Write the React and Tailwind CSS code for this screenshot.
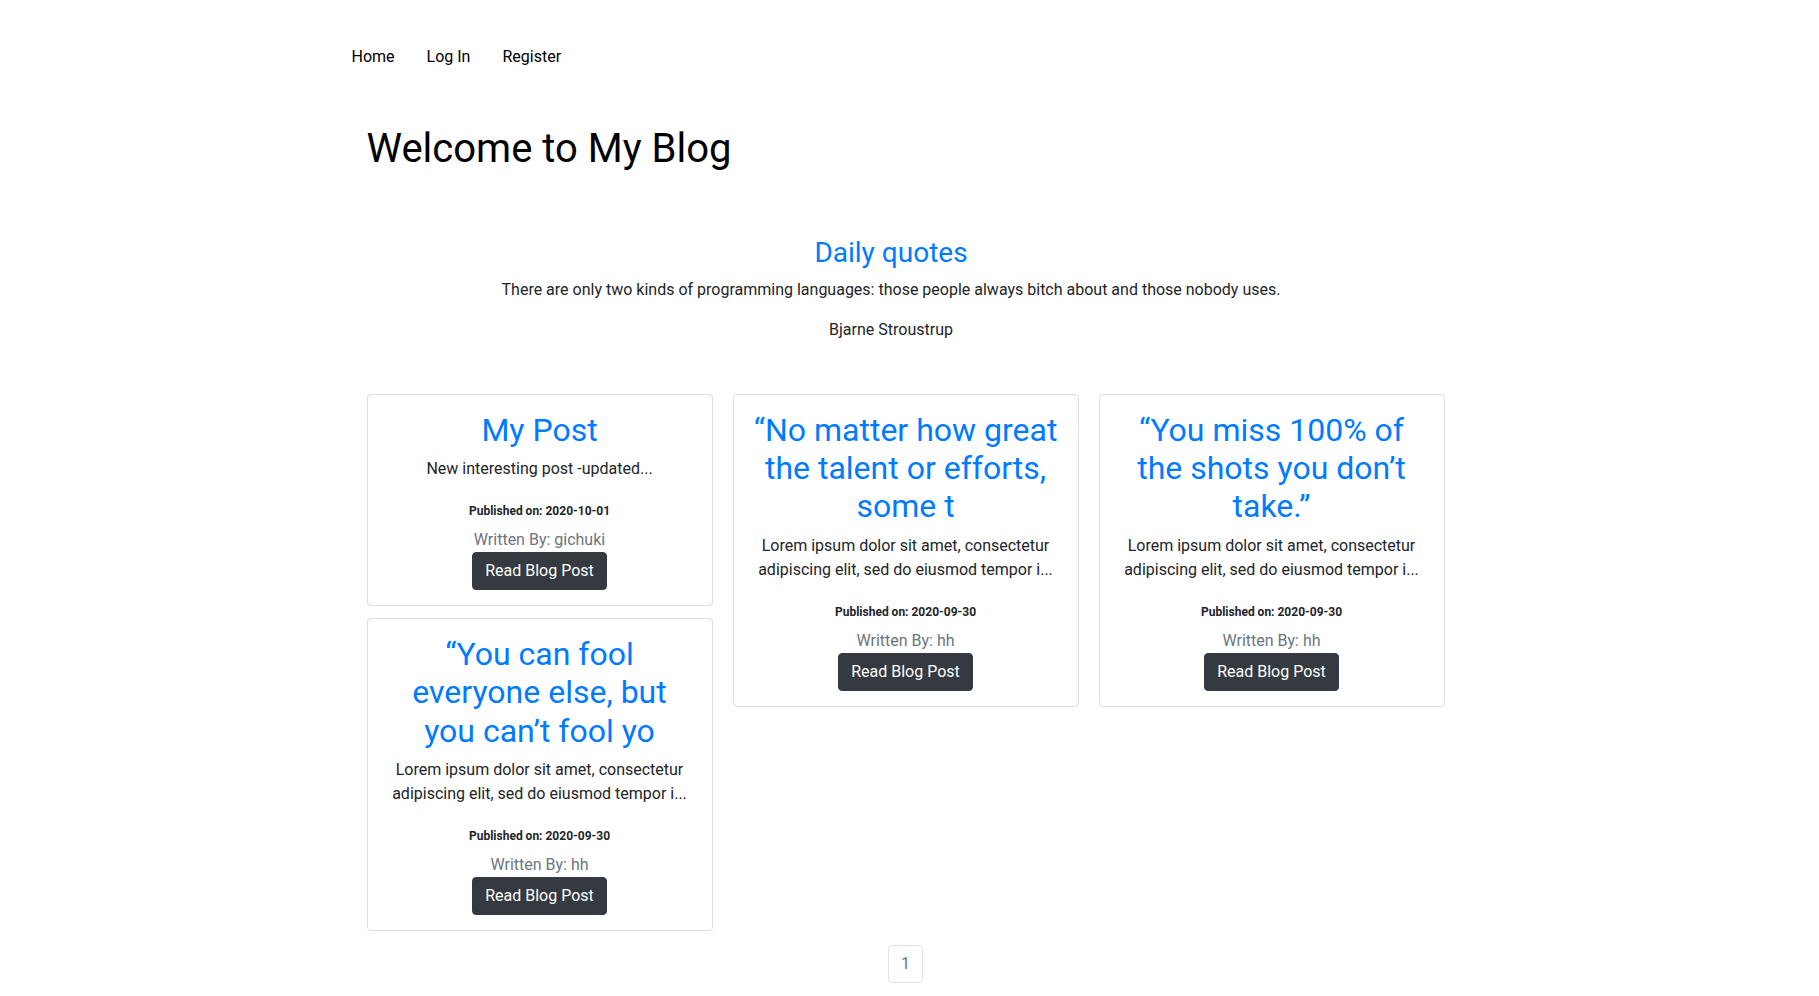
import React from 'react';

const posts = [
  {
    col: 0,
    title: 'My Post',
    body: 'New interesting post -updated...',
    date: '2020-10-01',
    author: 'gichuki',
  },
  {
    col: 0,
    title: '“You can fool everyone else, but you can’t fool yo',
    body: 'Lorem ipsum dolor sit amet, consectetur adipiscing elit, sed do eiusmod tempor i...',
    date: '2020-09-30',
    author: 'hh',
  },
  {
    col: 1,
    title: '“No matter how great the talent or efforts, some t',
    body: 'Lorem ipsum dolor sit amet, consectetur adipiscing elit, sed do eiusmod tempor i...',
    date: '2020-09-30',
    author: 'hh',
  },
  {
    col: 2,
    title: '“You miss 100% of the shots you don’t take.”',
    body: 'Lorem ipsum dolor sit amet, consectetur adipiscing elit, sed do eiusmod tempor i...',
    date: '2020-09-30',
    author: 'hh',
  },
];

const PostCard = ({ post }) => (
  <div className="border border-[#dfdfdf] rounded bg-white px-4 pt-4 pb-[15px] text-center">
    <h2 className="text-[32px] leading-[1.2] text-[#007bff] mb-2">{post.title}</h2>
    <p className="text-base leading-6 text-[#212529] mb-[17px]">{post.body}</p>
    <p className="leading-6 mb-[5px]">
      <small className="text-[12px] font-bold text-[#212529]">Published on: {post.date}</small>
    </p>
    <div className="leading-6 text-[#6c757d]">Written By: {post.author}</div>
    <button
      type="button"
      className="bg-[#343a40] text-white border border-[#343a40] rounded px-3 py-[6px] leading-6 text-base"
    >
      Read Blog Post
    </button>
  </div>
);

export default function App() {
  const columns = [0, 1, 2].map((c) => posts.filter((p) => p.col === c));

  return (
    <div className="min-h-screen bg-white font-['Roboto',sans-serif] text-[#212529]">
      <div className="w-[1140px] mx-auto">
        {/* nav */}
        <nav className="pt-[45px] -ml-1">
          <ul className="flex">
            <li><a href="#" className="block px-4 leading-6 text-black">Home</a></li>
            <li><a href="#" className="block px-4 leading-6 text-black">Log In</a></li>
            <li><a href="#" className="block px-4 leading-6 text-black">Register</a></li>
          </ul>
        </nav>

        <h1 className="mt-[56px] ml-[27px] text-[40px] leading-[1.2] text-black">Welcome to My Blog</h1>

        {/* daily quote */}
        <div className="mt-[63px] ml-[15px] w-[1073px] text-center">
          <h3 className="text-[28px] leading-[1.2] text-[#007bff] mb-2">Daily quotes</h3>
          <p className="leading-6 mb-4">
            There are only two kinds of programming languages: those people always bitch about and those nobody uses.
          </p>
          <p className="leading-6 mb-4">Bjarne Stroustrup</p>
        </div>

        {/* posts */}
        <div className="mt-[52px] ml-[27px] w-[1078px]">
          <div className="flex items-start gap-5">
            {columns.map((col, i) => (
              <div key={i} className="w-[346px] flex flex-col gap-3">
                {col.map((post) => (
                  <PostCard key={post.title} post={post} />
                ))}
              </div>
            ))}
          </div>

          <div className="flex justify-center mt-[14px] pb-4">
            <span className="border border-[#dee2e6] rounded px-3 py-2 leading-5 text-[#6c757d]">1</span>
          </div>
        </div>
      </div>
    </div>
  );
}
